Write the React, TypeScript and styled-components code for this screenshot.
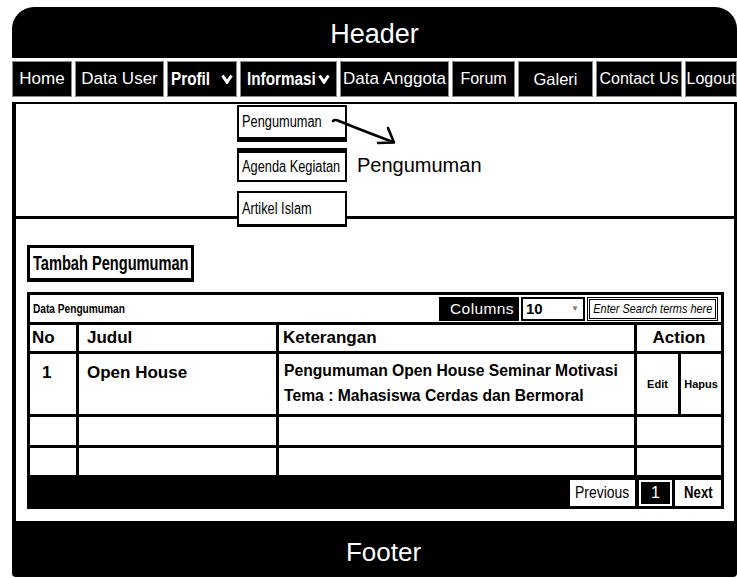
import React from "react";
import styled, { createGlobalStyle } from "styled-components";

const Global = createGlobalStyle`
  html, body { margin: 0; padding: 0; background: #fff; }
  body { font-family: "Liberation Sans", Arial, sans-serif; color: #000; }
  * { box-sizing: border-box; }
`;

/* Arial Narrow look: Liberation Sans compressed horizontally */
const Narrow = styled.span<{ $sx?: number; $origin?: string; $mr?: number }>`
  display: inline-block;
  font-family: "Liberation Sans", Arial, sans-serif;
  white-space: nowrap;
  transform: scaleX(${(p) => p.$sx ?? 0.84});
  transform-origin: ${(p) => p.$origin ?? "left"} center;
  margin-right: ${(p) => p.$mr ?? 0}px;
`;

const Frame = styled.div`
  margin: 7px 0 0 12px;
  width: 725px;
  height: 570px;
  background: #000;
  border-radius: 22px 22px 4px 4px;
  display: flex;
  flex-direction: column;
  overflow: hidden;
`;

const Header = styled.header`
  height: 51px;
  display: flex;
  align-items: center;
  justify-content: center;
  padding-top: 3px;
  color: #fff;
  font-size: 27px;
`;

const NavBar = styled.nav`
  display: flex;
  gap: 3px;
  padding: 3px 0 5px;
  background: #fff;
`;

const NavItem = styled.div<{ $w: number; $bold?: boolean; $size?: number }>`
  width: ${(p) => p.$w}px;
  flex: none;
  height: 36px;
  background: #000;
  border: 1px solid #8a8a8a;
  color: #fff;
  display: flex;
  align-items: center;
  justify-content: center;
  font-weight: ${(p) => (p.$bold ? 700 : 400)};
  font-size: ${(p) => p.$size ?? 17}px;
  white-space: nowrap;
`;

const Content = styled.main`
  position: relative;
  flex: 1;
  background: #fff;
  border-style: solid;
  border-color: #000;
  border-width: 2px 3px 0 4px;
  display: flex;
  flex-direction: column;
`;

const Banner = styled.section`
  height: 115px;
  flex: none;
  border-bottom: 3px solid #000;
  padding: 50px 0 0 341px;
  font-size: 20px;
`;

const Dropdown = styled.div`
  position: absolute;
  left: 221px;
  top: 1px;
  width: 110px;
  display: flex;
  flex-direction: column;
  z-index: 2;
`;

const DropItem = styled.div<{ $h: number; $bt: number; $bb: number; $mb: number }>`
  height: ${(p) => p.$h}px;
  margin-bottom: ${(p) => p.$mb}px;
  background: #fff;
  border: 2px solid #000;
  border-top-width: ${(p) => p.$bt}px;
  border-bottom-width: ${(p) => p.$bb}px;
  display: flex;
  align-items: center;
  padding-left: 3px;
  font-size: 16px;
  overflow: visible;
`;

const ArrowMark = styled.svg`
  position: absolute;
  left: 315px;
  top: 10px;
  z-index: 3;
`;

const Lower = styled.section`
  flex: 1;
  padding: 26px 10px 12px 11px;
  display: flex;
  flex-direction: column;
  align-items: flex-start;
  gap: 10px;
`;

const AddButton = styled.button`
  width: 167px;
  height: 37px;
  background: #fff;
  border: 3px solid #000;
  border-bottom-width: 4px;
  padding: 0 0 0 3px;
  text-align: left;
  font-family: "Liberation Sans", Arial, sans-serif;
  font-weight: 700;
  font-size: 20px;
  color: #000;
  overflow: visible;
`;

const Grid = styled.div`
  width: 697px;
  display: grid;
  grid-template-columns: 46px 197px 355px 41px 40px;
  grid-template-rows: 27px 26px 60px 28px 27px 28px;
  gap: 3px;
  padding: 3px;
  background: #000;
`;

const Cell = styled.div<{ $span?: number; $center?: boolean; $top?: boolean; $pl?: number }>`
  grid-column: span ${(p) => p.$span ?? 1};
  background: #fff;
  display: flex;
  align-items: ${(p) => (p.$top ? "flex-start" : "center")};
  justify-content: ${(p) => (p.$center ? "center" : "flex-start")};
  padding-left: ${(p) => (p.$center ? 0 : p.$pl ?? 5)}px;
  padding-top: ${(p) => (p.$top ? 9 : 0)}px;
  font-weight: 700;
  font-size: 17px;
`;

const TitleCell = styled.div`
  grid-column: 1 / -1;
  background: #fff;
  display: flex;
  align-items: center;
  padding: 0 3px;
`;

const TitleText = styled.div`
  font-weight: 700;
  font-size: 13px;
  margin-right: auto;
`;

const ColumnsLabel = styled.div`
  width: 80px;
  height: 24px;
  background: #000;
  color: #fff;
  display: flex;
  align-items: center;
  justify-content: flex-end;
  padding-right: 5px;
  font-size: 15.5px;
  letter-spacing: 0.4px;
`;

const SelectBox = styled.div`
  width: 64px;
  height: 24px;
  margin-left: 2px;
  border: 2px solid #000;
  display: flex;
  align-items: center;
  justify-content: space-between;
  padding: 0 4px 0 3px;
  font-size: 15px;
  font-weight: 700;
`;

const Caret = styled.span`
  color: #777;
  font-size: 8px;
`;

const SearchBox = styled.div`
  width: 131px;
  height: 24px;
  margin-left: 2px;
  border: 3px double #000;
  display: flex;
  align-items: center;
  justify-content: center;
  font-style: italic;
  font-size: 13px;
`;

const Desc = styled.div`
  font-size: 15.7px;
  line-height: 25px;
  margin-top: -5px;
`;

const Small = styled.span`
  font-size: 11px;
`;

const PagerCell = styled.div`
  grid-column: 1 / -1;
  background: #000;
  display: flex;
  justify-content: flex-end;
  align-items: flex-end;
`;

const PageBtn = styled.div<{ $w: number; $dark?: boolean; $bold?: boolean; $ml: number }>`
  width: ${(p) => p.$w}px;
  height: 26px;
  margin-left: ${(p) => p.$ml}px;
  background: ${(p) => (p.$dark ? "#000" : "#fff")};
  color: ${(p) => (p.$dark ? "#fff" : "#000")};
  border: ${(p) => (p.$dark ? "2px solid #fff" : "none")};
  display: flex;
  align-items: center;
  justify-content: center;
  font-weight: ${(p) => (p.$bold ? 700 : 400)};
  font-size: 16px;
`;

const Footer = styled.footer`
  height: 56px;
  flex: none;
  display: flex;
  align-items: center;
  justify-content: center;
  padding: 6px 0 0 18px;
  color: #fff;
  font-size: 26px;
`;

const Chevron = () => (
  <svg width="12" height="10" viewBox="0 0 12 10">
    <polyline points="1.5,1.5 6,8.2 10.5,1.5" fill="none" stroke="#fff" strokeWidth="3" />
  </svg>
);

type Nav = { label: string; w: number; size?: number; drop?: boolean; mr?: number };

const navItems: Nav[] = [
  { label: "Home", w: 60 },
  { label: "Data User", w: 89 },
  { label: "Profil", w: 70, size: 18, drop: true, mr: 4 },
  { label: "Informasi", w: 97, size: 18, drop: true, mr: -11 },
  { label: "Data Anggota", w: 109 },
  { label: "Forum", w: 63, size: 16 },
  { label: "Galeri", w: 75, size: 16.5 },
  { label: "Contact Us", w: 86, size: 16 },
  { label: "Logout", w: 52, size: 16 },
];

export default function App() {
  return (
    <>
      <Global />
      <Frame>
        <Header>Header</Header>
        <NavBar>
          {navItems.map((n) =>
            n.drop ? (
              <NavItem key={n.label} $w={n.w} $size={n.size} $bold>
                <Narrow $sx={0.85} $mr={n.mr}>{n.label}</Narrow>
                <Chevron />
              </NavItem>
            ) : (
              <NavItem key={n.label} $w={n.w} $size={n.size}>
                {n.label}
              </NavItem>
            )
          )}
        </NavBar>
        <Content>
          <Dropdown>
            <DropItem $h={37} $bt={2} $bb={5} $mb={6}>
              <Narrow $sx={0.8}>Pengumuman</Narrow>
            </DropItem>
            <DropItem $h={34} $bt={5} $bb={2} $mb={9}>
              <Narrow $sx={0.8}>Agenda Kegiatan</Narrow>
            </DropItem>
            <DropItem $h={36} $bt={2} $bb={3} $mb={0}>
              <Narrow $sx={0.8}>Artikel Islam</Narrow>
            </DropItem>
          </Dropdown>
          <ArrowMark width="90" height="45" viewBox="0 0 90 45">
            <path d="M2 7 Q 4 5 8 7 Q 30 16 62 28" fill="none" stroke="#000" strokeWidth="2.6" strokeLinecap="round" />
            <path d="M57 14 L63 28.5 L47 29" fill="none" stroke="#000" strokeWidth="2.6" strokeLinecap="round" strokeLinejoin="round" />
          </ArrowMark>
          <Banner>Pengumuman</Banner>
          <Lower>
            <AddButton>
              <Narrow $sx={0.73}>Tambah Pengumuman</Narrow>
            </AddButton>
            <Grid>
              <TitleCell>
                <TitleText>
                  <Narrow $sx={0.78}>Data Pengumuman</Narrow>
                </TitleText>
                <ColumnsLabel>Columns</ColumnsLabel>
                <SelectBox>
                  10<Caret>▼</Caret>
                </SelectBox>
                <SearchBox>
                  <Narrow $sx={0.84} $origin="center">Enter Search terms here</Narrow>
                </SearchBox>
              </TitleCell>

              <Cell $pl={2}>No</Cell>
              <Cell $pl={8}>Judul</Cell>
              <Cell $pl={4}>Keterangan</Cell>
              <Cell $span={2} $center>Action</Cell>

              <Cell $top $pl={12}>1</Cell>
              <Cell $top $pl={8}>Open House</Cell>
              <Cell $top $pl={5}>
                <Desc>
                  Pengumuman Open House Seminar Motivasi
                  <br />
                  Tema : Mahasiswa Cerdas dan Bermoral
                </Desc>
              </Cell>
              <Cell $center><Small>Edit</Small></Cell>
              <Cell $center><Small>Hapus</Small></Cell>

              <Cell />
              <Cell />
              <Cell />
              <Cell $span={2} />

              <Cell />
              <Cell />
              <Cell />
              <Cell $span={2} />

              <PagerCell>
                <PageBtn $w={65} $ml={0}>
                  <Narrow $sx={0.87} $origin="center">Previous</Narrow>
                </PageBtn>
                <PageBtn $w={33} $ml={4} $dark>1</PageBtn>
                <PageBtn $w={46} $ml={3} $bold>
                  <Narrow $sx={0.82} $origin="center">Next</Narrow>
                </PageBtn>
              </PagerCell>
            </Grid>
          </Lower>
        </Content>
        <Footer>Footer</Footer>
      </Frame>
    </>
  );
}
